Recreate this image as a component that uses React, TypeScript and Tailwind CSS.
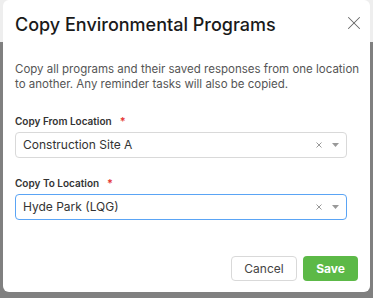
import { X } from 'lucide-react'

function Field({ label, value, focused }: { label: string; value: string; focused?: boolean }) {
  return (
    <div>
      <div className="flex items-center gap-[8px] text-[10px] font-semibold leading-[14px] text-[#333]">
        <span>{label}</span>
        <span className="text-[11px] text-[#e53935]">*</span>
      </div>
      <div
        className={
          'mt-[4px] flex h-[26px] items-center rounded-[4px] border bg-white pl-[7px] pr-[7px] ' +
          (focused ? 'border-[#5aa4f5]' : 'border-[#d9d9d9]')
        }
      >
        <span className="flex-1 text-[12px] text-[#333]">{value}</span>
        <svg width="6" height="6" viewBox="0 0 6 6">
          <path d="M0.5 0.5l5 5M5.5 0.5l-5 5" stroke="#999" strokeWidth="1" />
        </svg>
        <svg className="ml-[10px]" width="7" height="4" viewBox="0 0 7 4">
          <path d="M0 0h7L3.5 4z" fill="#999" />
        </svg>
      </div>
    </div>
  )
}

export default function App() {
  return (
    <div className="relative h-[298px] w-[373px] overflow-hidden" style={{ fontFamily: 'Inter, "Noto Sans", sans-serif' }}>
      {/* backdrop */}
      <div className="flex h-full flex-col">
        <div className="h-[42px] bg-[#eeeeee]" />
        <div className="flex-1 bg-[#808080]" />
      </div>

      {/* dialog */}
      <div className="absolute left-[3px] top-0 flex h-[292px] w-[367px] flex-col rounded-[6px] bg-white px-[12px]">
        <div className="flex items-start justify-between pt-[13px]">
          <h2 className="text-[18px] font-medium leading-[24px] text-[#1a1a1a]">Copy Environmental Programs</h2>
          <X className="mr-[-7px] mt-[-1px] text-[#666]" size={22} strokeWidth={1.1} />
        </div>

        <p className="mt-[25px] mr-[-10px] whitespace-nowrap text-[11.5px] leading-[15px] text-[#555]">
          Copy all programs and their saved responses from one location
          <br />
          to another. Any reminder tasks will also be copied.
        </p>

        <div className="mt-[22px] flex flex-col gap-[18px] pr-[11px]">
          <Field label="Copy From Location" value="Construction Site A" />
          <Field label="Copy To Location" value="Hyde Park (LQG)" focused />
        </div>

        <div className="mt-auto mb-[11px] flex justify-end gap-[6px]">
          <button className="h-[25px] w-[66px] rounded-[4px] border border-[#d9d9d9] bg-white text-[12px] text-[#444]">
            Cancel
          </button>
          <button className="h-[25px] w-[55px] rounded-[4px] bg-[#5cb947] text-[12px] font-bold text-white">
            Save
          </button>
        </div>
      </div>
    </div>
  )
}
